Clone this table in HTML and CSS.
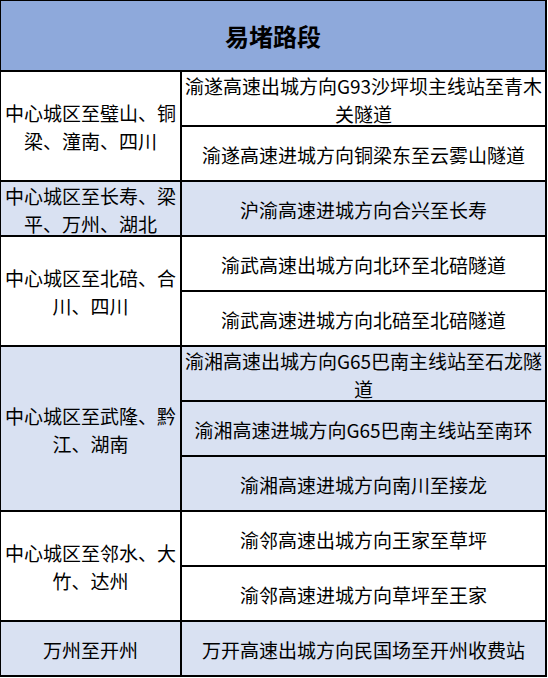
FILE: index.html
```html
<!DOCTYPE html>
<html lang="zh-CN">
<head>
<meta charset="utf-8">
<title>易堵路段</title>
<link rel="stylesheet" href="styles.css">
</head>
<body>
<div class="sheet">
  <div class="cell head">易堵路段</div>

  <div class="cell area span2">中心城区至璧山、铜<br>梁、潼南、四川</div>
  <div class="cell road">渝遂高速出城方向G93沙坪坝主线站至青木<br>关隧道</div>
  <div class="cell road">渝遂高速进城方向铜梁东至云雾山隧道</div>

  <div class="cell area alt">中心城区至长寿、梁<br>平、万州、湖北</div>
  <div class="cell road alt">沪渝高速进城方向合兴至长寿</div>

  <div class="cell area span2">中心城区至北碚、合<br>川、四川</div>
  <div class="cell road">渝武高速出城方向北环至北碚隧道</div>
  <div class="cell road">渝武高速进城方向北碚至北碚隧道</div>

  <div class="cell area alt span3">中心城区至武隆、黔<br>江、湖南</div>
  <div class="cell road alt">渝湘高速出城方向G65巴南主线站至石龙隧<br>道</div>
  <div class="cell road alt">渝湘高速进城方向G65巴南主线站至南环</div>
  <div class="cell road alt">渝湘高速进城方向南川至接龙</div>

  <div class="cell area span2">中心城区至邻水、大<br>竹、达州</div>
  <div class="cell road">渝邻高速出城方向王家至草坪</div>
  <div class="cell road">渝邻高速进城方向草坪至王家</div>

  <div class="cell area alt">万州至开州</div>
  <div class="cell road alt">万开高速出城方向民国场至开州收费站</div>
</div>
</body>
</html>
```

FILE: styles.css
```css
html, body {
  margin: 0;
  padding: 0;
  background: #ffffff;
}

body {
  font-family: "Noto Sans CJK SC", "Noto Sans", sans-serif;
  color: #000000;
}

.sheet {
  display: grid;
  grid-template-columns: 181px 365px;
  grid-template-rows: 71px repeat(11, 55px);
  width: 547px;
  box-sizing: border-box;
  border-top: 1px solid #000;
  border-left: 1px solid #000;
}

.cell {
  box-sizing: border-box;
  border-right: 2px solid #000;
  border-bottom: 2px solid #000;
  display: flex;
  align-items: center;
  justify-content: center;
  text-align: center;
  white-space: nowrap;
  font-size: 19px;
  line-height: 28px;
  padding-top: 2px;
  background: #ffffff;
}

.head {
  grid-column: 1 / span 2;
  background: #8ea9db;
  font-size: 24px;
  font-weight: 700;
  padding-top: 1px;
}

.alt {
  background: #d9e1f2;
}

.span2 {
  grid-row: span 2;
}

.span3 {
  grid-row: span 3;
}
```
